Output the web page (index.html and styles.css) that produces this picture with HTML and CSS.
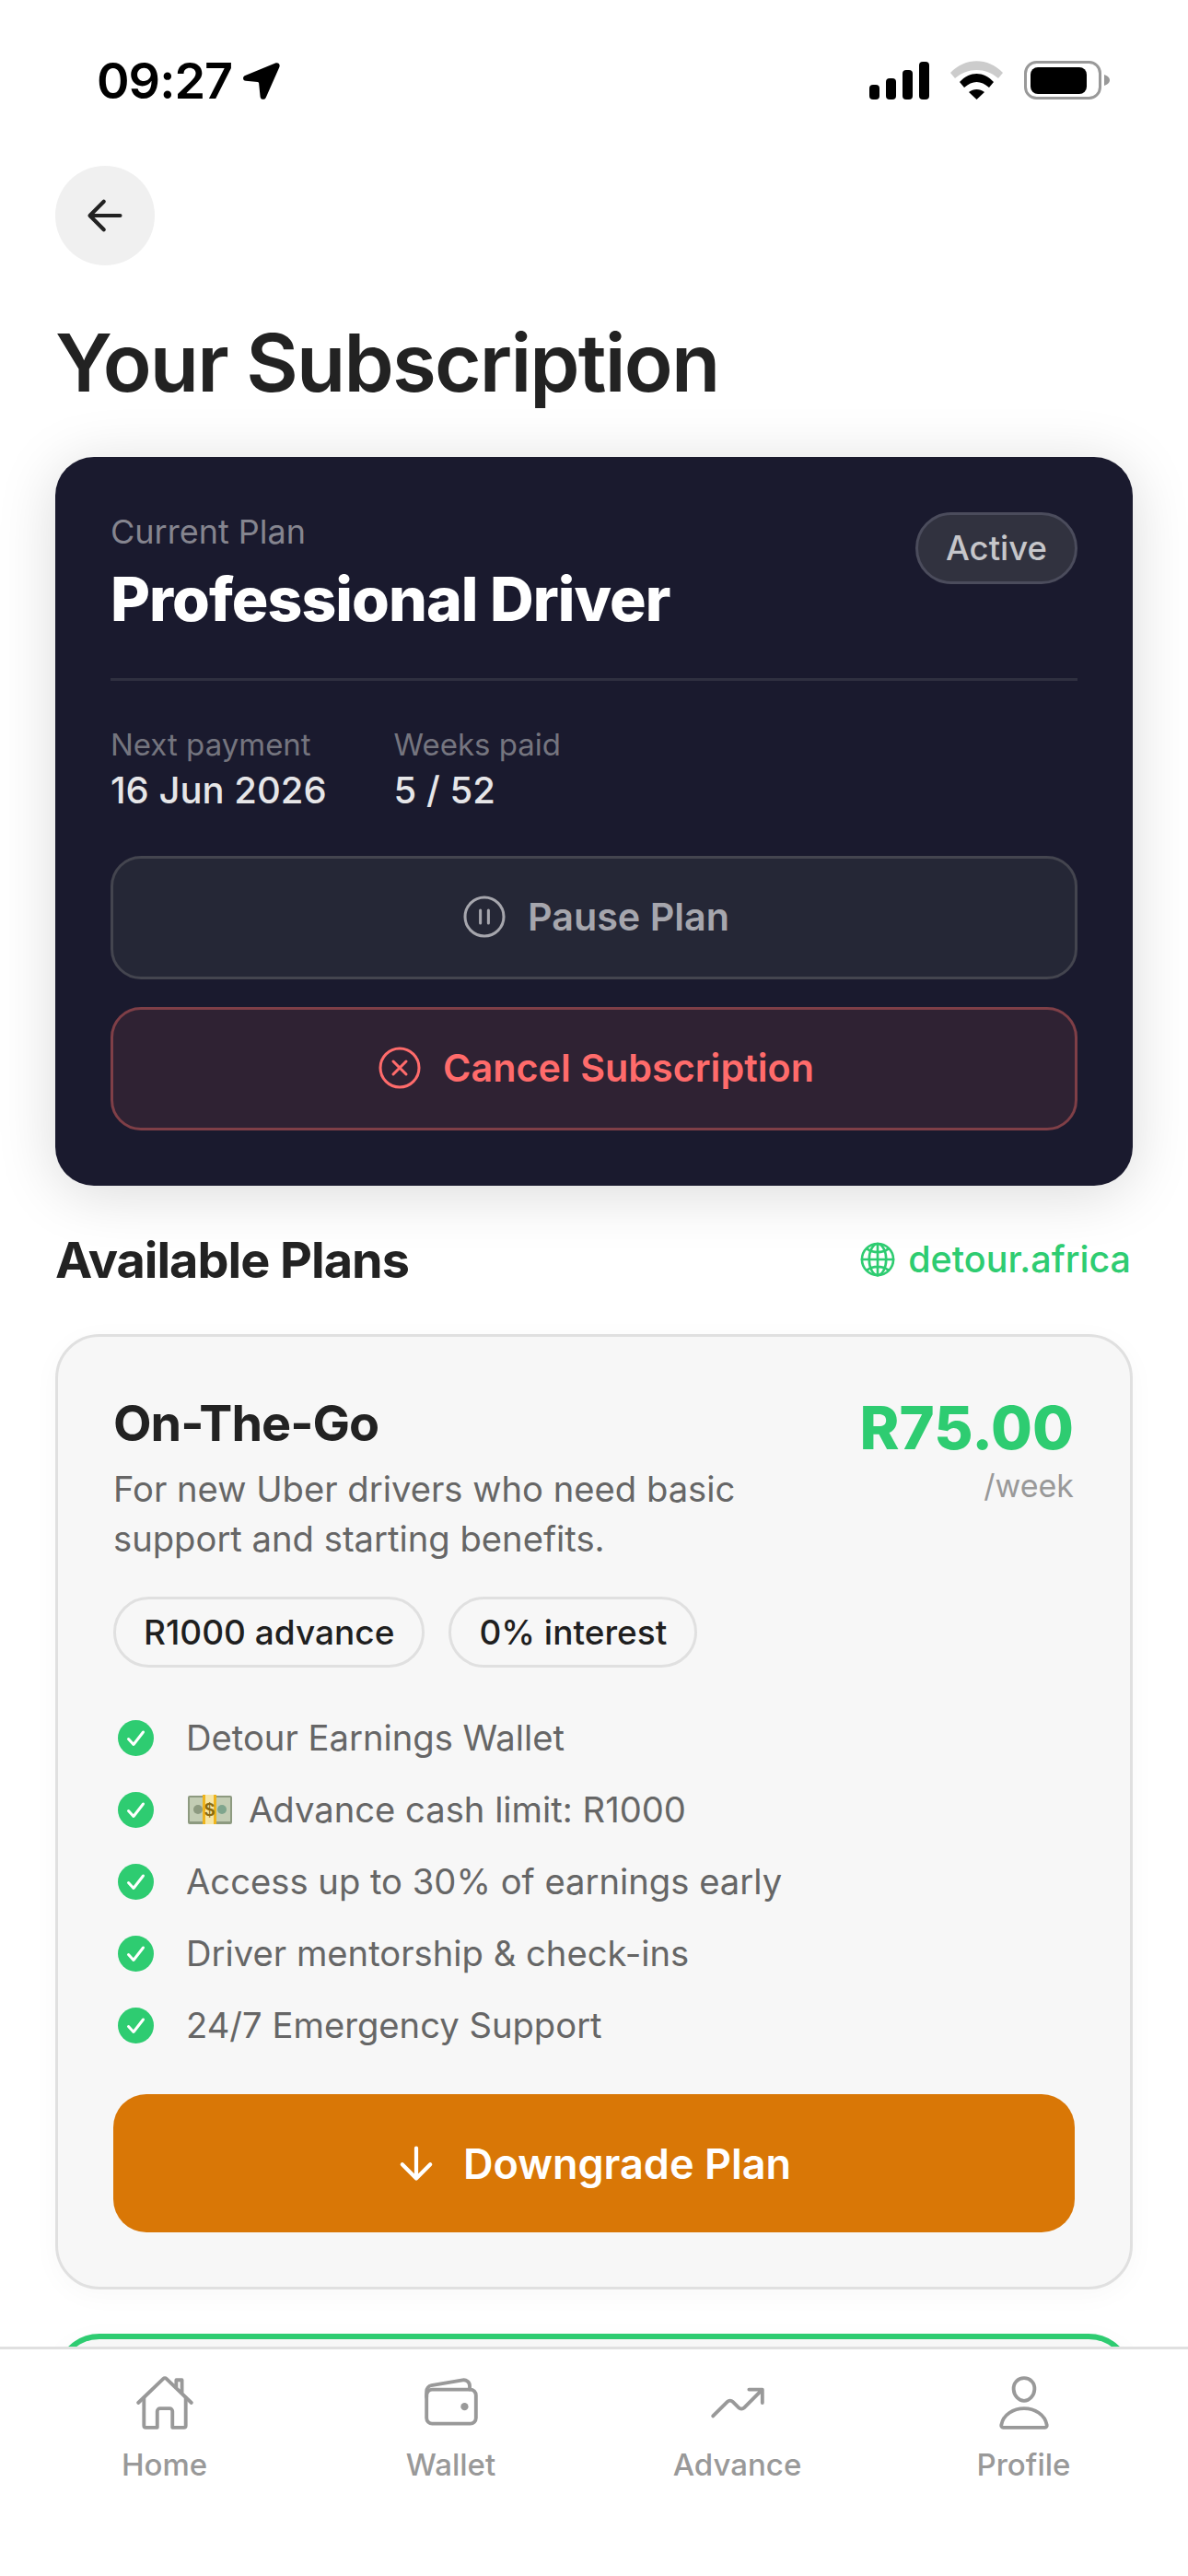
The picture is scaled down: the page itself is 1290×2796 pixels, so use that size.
FILE: index.html
```html
<!DOCTYPE html>
<html lang="en">
<head>
    <meta charset="UTF-8">
    <meta name="viewport" content="width=device-width, initial-scale=1.0">
    <title>Your Subscription</title>
    <link rel="stylesheet" href="styles.css">
</head>
<body>
    <div class="screen">
        <div class="status-bar">
            <div class="time">
                <span>09:27</span>
                <svg class="location" viewBox="0 0 40 40"><path d="M35 0.6c3-1.2 5.600 1.300 4.300 4.300L24.800 37.700c-1.400 3.200-5.800 2.800-6.200-0.800l-1.500-14.600c-0.100-0.800-0.500-1.200-1.300-1.300L2.900 19.800c-3.500-0.400-3.800-4.600-0.700-5.900z"/></svg>
            </div>
            <div class="status-icons">
                <svg class="signal" viewBox="0 0 65 41">
                    <rect x="0" y="25" width="11" height="16" rx="4"/>
                    <rect x="18" y="18" width="11" height="23" rx="4"/>
                    <rect x="36" y="9" width="11" height="32" rx="4"/>
                    <rect x="54" y="0" width="11" height="41" rx="4"/>
                </svg>
                <svg class="wifi" viewBox="0 0 57 42">
                    <path fill="#cccccc" d="M0 13C16-4 41-4 57 13l-5 6C38 7 19 7 5 19z"/>
                    <path d="M10 23C21 11 36 11 47 23l-5 6C33 21 24 21 15 29z"/>
                    <path d="M20 34c5-4 12-4 17 0l-8.500 8z"/>
                </svg>
                <svg class="battery" viewBox="0 0 93 42">
                    <rect x="1.500" y="1.500" width="81" height="39" rx="12" fill="none" stroke="#999999" stroke-width="3"/>
                    <rect x="7" y="7" width="61" height="29" rx="8"/>
                    <path fill="#999999" d="M87 15c3 1 6 3 6 6s-3 5-6 6z"/>
                </svg>
            </div>
        </div>

        <div class="content">
            <div class="back-btn">
                <svg class="arrow" viewBox="0 0 512 512"><path class="stroke" stroke-width="40" d="M244 400L100 256l144-144M120 256h292"/></svg>
            </div>
            <h1>Your Subscription</h1>

            <div class="current-card">
                <div class="current-top">
                    <div>
                        <div class="current-label">Current Plan</div>
                        <div class="current-name">Professional Driver</div>
                    </div>
                    <span class="badge">Active</span>
                </div>
                <div class="divider"></div>
                <div class="stats">
                    <div>
                        <div class="stat-label">Next payment</div>
                        <div class="stat-value">16 Jun 2026</div>
                    </div>
                    <div>
                        <div class="stat-label">Weeks paid</div>
                        <div class="stat-value">5 / 52</div>
                    </div>
                </div>
                <div class="action pause">
                    <svg class="action-icon" viewBox="0 0 512 512"><path class="stroke" stroke-width="28" d="M448 256c0-106-86-192-192-192S64 150 64 256s86 192 192 192 192-86 192-192z"/><path class="stroke" stroke-width="28" d="M216 192v128M296 192v128"/></svg>
                    <span>Pause Plan</span>
                </div>
                <div class="action cancel">
                    <svg class="action-icon" viewBox="0 0 512 512"><path class="stroke" stroke-width="28" d="M448 256c0-106-86-192-192-192S64 150 64 256s86 192 192 192 192-86 192-192z"/><path class="stroke" stroke-width="28" d="M320 320L192 192M192 320l128-128"/></svg>
                    <span>Cancel Subscription</span>
                </div>
            </div>

            <div class="plans-head">
                <h2>Available Plans</h2>
                <div class="site-link">
                    <svg class="globe" viewBox="0 0 512 512">
                        <path class="stroke" stroke-width="32" d="M256 48C141.130 48 48 141.130 48 256s93.130 208 208 208 208-93.130 208-208S370.870 48 256 48z"/>
                        <path class="stroke" stroke-width="32" d="M256 48c-58.070 0-112.670 93.130-112.670 208S197.930 464 256 464s112.670-93.130 112.670-208S314.070 48 256 48z"/>
                        <path class="stroke" stroke-width="32" d="M117.330 117.330c38.240 27.150 86.380 43.340 138.670 43.340s100.430-16.190 138.670-43.340M394.670 394.670c-38.240-27.150-86.380-43.340-138.670-43.340s-100.430 16.190-138.670 43.340M256 48v416M464 256H48"/>
                    </svg>
                    <span>detour.africa</span>
                </div>
            </div>

            <div class="plan-card">
                <div class="plan-top">
                    <div class="plan-info">
                        <div class="plan-name">On-The-Go</div>
                        <div class="plan-desc">For new Uber drivers who need basic support and starting benefits.</div>
                    </div>
                    <div class="plan-price">
                        <div class="price">R75.00</div>
                        <div class="period">/week</div>
                    </div>
                </div>
                <div class="chips">
                    <span class="chip">R1000 advance</span>
                    <span class="chip">0% interest</span>
                </div>
                <ul class="features">
                    <li>
                        <svg class="check" viewBox="0 0 39 39"><circle cx="19.500" cy="19.500" r="19.500"/><path d="M11.500 20.500l5.500 6 10.500-13.500"/></svg>
                        <span>Detour Earnings Wallet</span>
                    </li>
                    <li>
                        <svg class="check" viewBox="0 0 39 39"><circle cx="19.500" cy="19.500" r="19.500"/><path d="M11.500 20.500l5.500 6 10.500-13.500"/></svg>
                        <svg class="money" viewBox="0 0 48 32">
                            <rect x="0" y="1" width="48" height="31" rx="2" fill="#8d9a80"/>
                            <rect x="2" y="3" width="44" height="26" fill="#c3cdb4"/>
                            <circle cx="11" cy="16" r="5" fill="#8d9a80"/>
                            <circle cx="37" cy="16" r="5" fill="#7fa58d"/>
                            <rect x="16" y="0" width="15" height="32" fill="#f6e6a6"/>
                            <rect x="16" y="0" width="3" height="32" fill="#efb41c"/>
                            <rect x="28" y="0" width="3" height="32" fill="#efb41c"/>
                            <text x="23.500" y="23" text-anchor="middle" class="money-sign">$</text>
                        </svg>
                        <span>Advance cash limit: R1000</span>
                    </li>
                    <li>
                        <svg class="check" viewBox="0 0 39 39"><circle cx="19.500" cy="19.500" r="19.500"/><path d="M11.500 20.500l5.500 6 10.500-13.500"/></svg>
                        <span>Access up to 30% of earnings early</span>
                    </li>
                    <li>
                        <svg class="check" viewBox="0 0 39 39"><circle cx="19.500" cy="19.500" r="19.500"/><path d="M11.500 20.500l5.500 6 10.500-13.500"/></svg>
                        <span>Driver mentorship &amp; check-ins</span>
                    </li>
                    <li>
                        <svg class="check" viewBox="0 0 39 39"><circle cx="19.500" cy="19.500" r="19.500"/><path d="M11.500 20.500l5.500 6 10.500-13.500"/></svg>
                        <span>24/7 Emergency Support</span>
                    </li>
                </ul>
                <div class="plan-btn">
                    <svg class="arrow" viewBox="0 0 512 512"><path class="stroke" stroke-width="40" d="M112 268l144 144 144-144M256 392V100"/></svg>
                    <span>Downgrade Plan</span>
                </div>
            </div>

            <div class="plan-card next-card"></div>
        </div>

        <nav class="tab-bar">
            <div class="tab">
                <svg class="tab-icon" viewBox="0 0 512 512"><path class="stroke" stroke-width="30" d="M80 212v236a16 16 0 0016 16h96V328a24 24 0 0124-24h80a24 24 0 0124 24v136h96a16 16 0 0016-16V212"/><path class="stroke" stroke-width="30" d="M480 256L266.890 52c-5-5.280-16.690-5.340-21.780 0L32 256M400 179V64h-48v69"/></svg>
                <span>Home</span>
            </div>
            <div class="tab">
                <svg class="tab-icon" viewBox="0 0 512 512"><rect class="stroke" stroke-width="30" x="48" y="144" width="416" height="288" rx="48"/><path class="stroke" stroke-width="30" d="M411.360 144v-30A50 50 0 00352 64.900L88.640 109.850A50 50 0 0048 159v49"/><path class="dot" d="M368 320a32 32 0 1132-32 32 32 0 01-32 32z"/></svg>
                <span>Wallet</span>
            </div>
            <div class="tab">
                <svg class="tab-icon" viewBox="0 0 512 512"><path class="stroke" stroke-width="30" d="M352 144h112v112M48 368l121.370-121.370a32 32 0 0145.260 0l50.740 50.740a32 32 0 0045.260 0L448 160"/></svg>
                <span>Advance</span>
            </div>
            <div class="tab">
                <svg class="tab-icon" viewBox="0 0 512 512"><path class="stroke" stroke-width="30" d="M344 144c-3.920 52.870-44 96-88 96s-84.150-43.050-88-96c-4-55 35-96 88-96s92 42 88 96z"/><path class="stroke" stroke-width="30" d="M256 304c-87 0-175.300 48-191.640 138.600C62.390 453.520 68.570 464 80 464h352c11.440 0 17.620-10.480 15.650-21.400C431.300 352 343 304 256 304z"/></svg>
                <span>Profile</span>
            </div>
        </nav>
    </div>
</body>
</html>
```

FILE: styles.css
```css
* {
    box-sizing: border-box;
}
body {
    margin: 0;
    background-color: #fff;
    font-family: Inter, "Noto Sans", sans-serif;
    color: #222;
}
.screen {
    width: 1290px;
    height: 2796px;
    display: flex;
    flex-direction: column;
    overflow: hidden;
}
.stroke {
    fill: none;
    stroke: currentColor;
    stroke-linecap: round;
    stroke-linejoin: round;
}
.arrow {
    width: 54px;
    height: 54px;
    flex-shrink: 0;
}

/* status bar */
.status-bar {
    height: 180px;
    flex-shrink: 0;
    padding: 66px 85px 0 105px;
    display: flex;
    justify-content: space-between;
    align-items: flex-start;
    color: #000;
}
.time {
    display: flex;
    align-items: center;
    gap: 12px;
    font-size: 54px;
    font-weight: 600;
    line-height: 44px;
    letter-spacing: -1px;
}
.location {
    width: 40px;
    height: 40px;
}
.status-icons {
    display: flex;
    align-items: center;
    gap: 23px;
}
.signal {
    width: 65px;
    height: 41px;
}
.wifi {
    width: 57px;
    height: 42px;
}
.battery {
    width: 93px;
    height: 42px;
}

/* page */
.content {
    flex: 1;
    min-height: 0;
    overflow: hidden;
    padding: 0 60px;
}
.back-btn {
    width: 108px;
    height: 108px;
    border-radius: 50%;
    background-color: #f0f0f0;
    display: flex;
    justify-content: center;
    align-items: center;
    color: #222;
}
h1 {
    margin: 56px 0 52px;
    font-size: 87px;
    font-weight: 600;
    line-height: 100px;
    letter-spacing: -1.8px;
}

/* current plan */
.current-card {
    height: 791px;
    padding: 60px;
    border-radius: 42px;
    background-color: #1a1a2e;
    box-shadow: 0 8px 64px rgba(0,0,0,0.15);
}
.current-top {
    display: flex;
    justify-content: space-between;
    align-items: flex-start;
}
.current-label {
    font-size: 36px;
    line-height: 42px;
    color: #85858f;
}
.current-name {
    margin-top: 12px;
    font-size: 66px;
    font-weight: 800;
    line-height: 80px;
    letter-spacing: -0.95px;
    color: #fff;
}
.badge {
    height: 78px;
    padding: 0 30px;
    border: 3px solid #4b4c5c;
    border-radius: 39px;
    background-color: #31323f;
    display: flex;
    align-items: center;
    font-size: 36.5px;
    font-weight: 500;
    color: #c6c6ca;
}
.divider {
    height: 3px;
    margin-top: 46px;
    background-color: #2f3040;
}
.stats {
    margin-top: 49px;
    display: flex;
    gap: 73px;
}
.stat-label {
    font-size: 33px;
    line-height: 40px;
    color: #75757f;
}
.stat-value {
    margin-top: 6px;
    font-size: 40px;
    font-weight: 500;
    line-height: 48px;
    color: #e6e6e8;
}
.action {
    height: 134px;
    margin-top: 30px;
    padding-bottom: 2px;
    border: 3px solid;
    border-radius: 33px;
    display: flex;
    justify-content: center;
    align-items: center;
    gap: 19px;
    font-size: 41.3px;
    font-weight: 600;
}
.action-icon {
    width: 56px;
    height: 56px;
    flex-shrink: 0;
}
.pause {
    margin-top: 47px;
    background-color: #252736;
    border-color: #44454f;
    color: #a6a6ad;
}
.cancel {
    background-color: #2f2233;
    border-color: #7f3f47;
    color: #ff6b6b;
}

/* plans */
.plans-head {
    height: 70px;
    margin: 45px 2px 46px 0;
    display: flex;
    justify-content: space-between;
    align-items: center;
}
h2 {
    margin: 0;
    font-size: 54px;
    font-weight: 700;
    letter-spacing: -1px;
}
.site-link {
    display: flex;
    align-items: center;
    gap: 12px;
    font-size: 39.5px;
    font-weight: 500;
    color: #2ecc71;
}
.globe {
    width: 42px;
    height: 42px;
}
.plan-card {
    padding: 61px 60px 59px;
    border: 3px solid #e0e0e0;
    border-radius: 48px;
    background-color: #f7f7f7;
    box-shadow: 0 6px 30px rgba(0,0,0,0.03);
}
.plan-top {
    padding-right: 1px;
    display: flex;
    justify-content: space-between;
}
.plan-info {
    width: 720px;
}
.plan-name {
    font-size: 54px;
    font-weight: 700;
    line-height: 66px;
    letter-spacing: -1px;
}
.plan-desc {
    margin-top: 11px;
    font-size: 38.2px;
    line-height: 54px;
    color: #666;
}
.plan-price {
    text-align: right;
}
.price {
    font-size: 65px;
    font-weight: 800;
    line-height: 76px;
    color: #2ecc71;
}
.period {
    font-size: 34px;
    line-height: 50px;
    color: #999;
}
.chips {
    margin-top: 36px;
    display: flex;
    gap: 26px;
}
.chip {
    height: 77px;
    padding: 0 30px;
    border: 3px solid #e0e0e0;
    border-radius: 39px;
    display: flex;
    align-items: center;
    font-size: 37px;
    font-weight: 500;
    color: #1f1f1f;
}
.features {
    list-style: none;
    margin: 37px 0 36px;
    padding: 0;
}
.features li {
    height: 78px;
    display: flex;
    align-items: center;
    font-size: 38.2px;
    color: #666;
}
.check {
    width: 39px;
    height: 39px;
    margin: 0 35px 0 5px;
    flex-shrink: 0;
}
.check circle {
    fill: #2ecc71;
}
.check path {
    fill: none;
    stroke: #fff;
    stroke-width: 3;
    stroke-linecap: round;
    stroke-linejoin: round;
}
.money {
    width: 48px;
    height: 32px;
    margin: 0 18px 0 2px;
    flex-shrink: 0;
}
.money-sign {
    font-family: "Liberation Sans", sans-serif;
    font-size: 20px;
    font-weight: 700;
    fill: #8a6a10;
}
.plan-btn {
    height: 150px;
    padding-right: 6px;
    border-radius: 36px;
    background-color: #d97706;
    display: flex;
    justify-content: center;
    align-items: center;
    gap: 24px;
    font-size: 45px;
    font-weight: 600;
    color: #fff;
}
.next-card {
    height: 400px;
    margin-top: 48px;
    border: 6px solid #2ecc71;
}

/* tabs */
.tab-bar {
    height: 249px;
    flex-shrink: 0;
    padding: 25px 23px 0;
    border-top: 3px solid #e0e0e0;
    background-color: #fff;
    display: grid;
    grid-template-columns: repeat(4, 1fr);
    align-items: start;
}
.tab {
    display: flex;
    flex-direction: column;
    align-items: center;
    font-size: 33px;
    line-height: 40px;
    font-weight: 500;
    color: #999;
}
.tab-icon {
    width: 66px;
    height: 66px;
    margin-bottom: 14px;
}
.dot {
    fill: currentColor;
}
```
